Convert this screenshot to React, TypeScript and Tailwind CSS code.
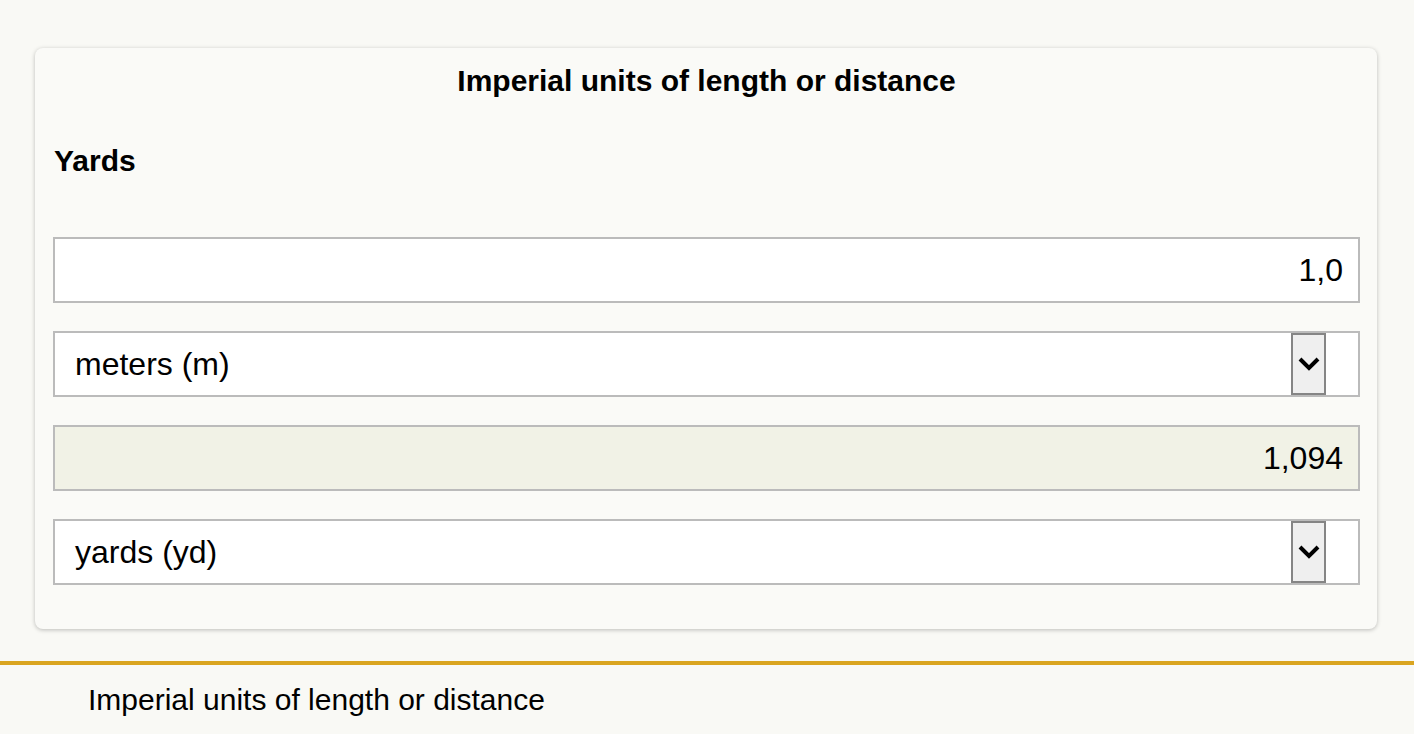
const font = { fontFamily: '"Liberation Sans", Arial, sans-serif' };

function Chevron() {
  return (
    <svg width="22" height="16" viewBox="0 0 22 16" fill="none">
      <polyline points="2,3 11,12 20,3" stroke="black" strokeWidth="4" strokeLinejoin="miter" />
    </svg>
  );
}

function SelectBox({ label }: { label: string }) {
  return (
    <div className="flex h-[66px] items-center border-2 border-[#bbbbbb] bg-white pl-[20px] pr-[32px]">
      <div className="flex-1 text-[32px] leading-[36px] text-black">{label}</div>
      <div className="flex h-[62px] w-[35px] items-center justify-center border-2 border-[#858585] bg-[#efefef]">
        <Chevron />
      </div>
    </div>
  );
}

export default function App() {
  return (
    <div className="min-h-screen bg-[#f9f9f5] text-black" style={font}>
      <div className="pt-[48px] pl-[35px] pr-[37px]">
        <div className="rounded-[8px] bg-[#fafaf7] pl-[18px] pr-[17px] pb-[44px] pt-[16px] shadow-[0_1px_4px_rgba(0,0,0,0.25)]">
          <h1 className="text-center text-[30px] font-bold leading-[34px]">
            Imperial units of length or distance
          </h1>
          <h2 className="mt-[46px] pl-[1px] text-[30px] font-bold leading-[34px]">Yards</h2>
          <div className="mt-[59px] flex flex-col gap-[28px]">
            <div className="flex h-[66px] items-center justify-end border-2 border-[#bbbbbb] bg-white pr-[15px] text-[32px]">
              1,0
            </div>
            <SelectBox label="meters (m)" />
            <div className="flex h-[66px] items-center justify-end border-2 border-[#bbbbbb] bg-[#f1f2e6] pr-[15px] text-[32px]">
              1,094
            </div>
            <SelectBox label="yards (yd)" />
          </div>
        </div>
      </div>
      <div className="mt-[32px] h-[4px] bg-[#daa520]" />
      <div className="pl-[88px] pt-[18px] text-[30px] leading-[34px]">Imperial units of length or distance</div>
    </div>
  );
}
